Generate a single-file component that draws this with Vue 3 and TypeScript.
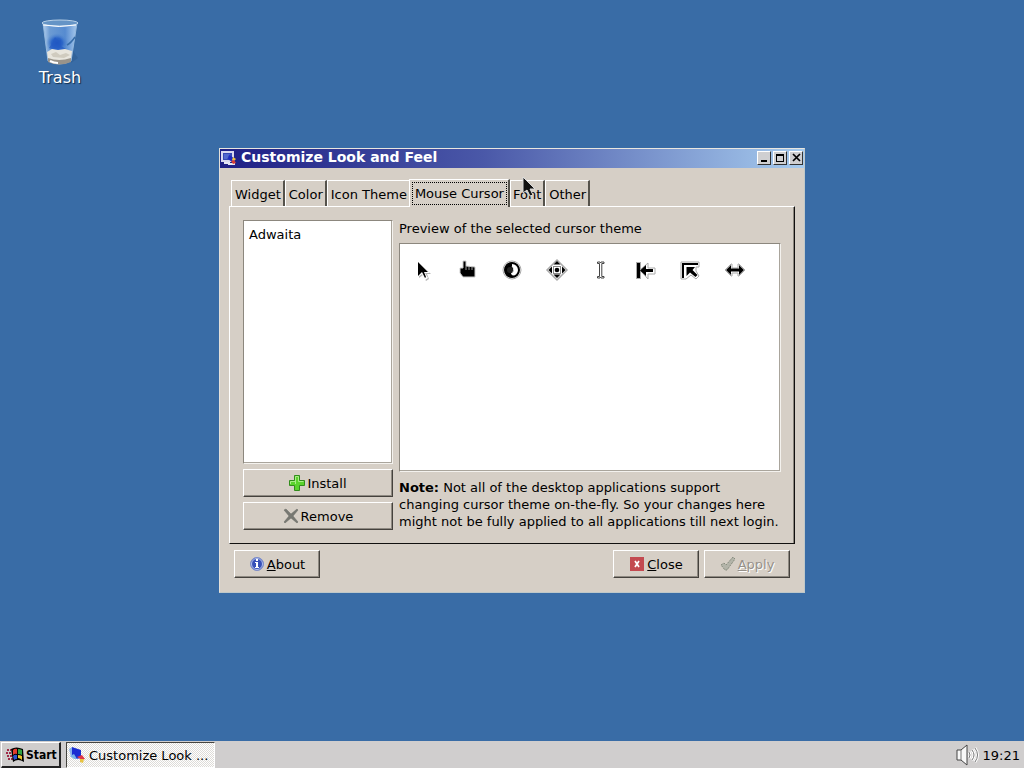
<script setup lang="ts">
import { ref } from 'vue'

const tabs: string[] = ['Widget', 'Color', 'Icon Theme', 'Mouse Cursor', 'Font', 'Other']
const activeTab = ref<string>('Mouse Cursor')
const themes: string[] = ['Adwaita']
</script>

<template>
  <div class="screen">
    <main class="desktop">
      <a class="shortcut" href="#trash">
        <svg width="40" height="48" viewBox="0 0 40 48" aria-hidden="true">
          <defs>
            <linearGradient id="glass" x1="0" x2="1" y1="0" y2="0">
              <stop offset="0" stop-color="#b4d0ee" />
              <stop offset=".2" stop-color="#6c9bd3" />
              <stop offset=".65" stop-color="#568bd0" />
              <stop offset="1" stop-color="#a8c9ec" />
            </linearGradient>
            <radialGradient id="blob">
              <stop offset="0" stop-color="#1a50bb" />
              <stop offset=".5" stop-color="#2c66c8" />
              <stop offset="1" stop-color="#568bd0" stop-opacity="0" />
            </radialGradient>
          </defs>
          <path d="M33 33 L38 40 L31 45 Z" fill="#2f5d92" opacity=".6" />
          <path d="M3 5 L8 43 Q19 49 31 43 L37 5 Z" fill="url(#glass)" stroke="#94b9df" />
          <ellipse cx="17" cy="25" rx="11" ry="10" fill="url(#blob)" />
          <path d="M9 30 L13 24 L15 19 L18 23 L21 22 L21 28 L26 31 L18 33 Z" fill="#235bc4" opacity=".7" />
          <path d="M35 19 Q31 25 27 27" fill="none" stroke="#376da9" stroke-width="1.5" />
          <path d="M7 34 L12 31 L18 32 L25 31 L32 33 L31 41 Q19 46 8 41 Z" fill="#e8e5dd" />
          <path d="M11 36 L16 34 L20 37 L26 35 L30 37 L24 40 L13 39 Z" fill="#d0cbbf" />
          <path d="M8 40 Q19 44 31 40 L31 44 Q19 49 8 44 Z" fill="#99938a" />
          <path d="M10 43 Q14 45 18 45" fill="none" stroke="#fff" stroke-width="2" />
          <ellipse cx="20" cy="5" rx="18" ry="3" fill="#6594c6" stroke="#b9d1e8" />
          <path d="M3 7 Q19 10 36 7" fill="none" stroke="#fff" />
        </svg>
        <span>Trash</span>
      </a>

      <section class="window" aria-label="Customize Look and Feel">
        <header class="titlebar">
          <svg width="16" height="16" viewBox="0 0 16 16" aria-hidden="true">
            <path d="M1 2 H12 V11 H1 Z" fill="#3549b5" stroke="#d9d9f0" stroke-width="2" />
            <path d="M3 13 H8 V14 H14" fill="none" stroke="#e6e6f5" stroke-width="2" />
            <path d="M3 4 H9 L6 9 H3 Z" fill="#5268cf" />
            <path d="M8 5 L13 8 L11 12 L7 9 Z" fill="#1d2bc0" />
            <path d="M12 7 L15 9 L13 11 L11 10 Z" fill="#f0c340" />
            <path d="M10 11 L13 10 L15 13 L12 14 Z" fill="#d83b36" />
          </svg>
          <h1>Customize Look and Feel</h1>
          <div class="controls">
            <button type="button" aria-label="Minimize">
              <svg width="12" height="12" viewBox="0 0 12 12"><path d="M3 9 H9" stroke="#000" stroke-width="2" /></svg>
            </button>
            <button type="button" aria-label="Maximize">
              <svg width="12" height="12" viewBox="0 0 12 12"><path d="M2 2 H10 V10 H2 Z M3 4 H9 V9 H3 Z" fill-rule="evenodd" /></svg>
            </button>
            <button type="button" aria-label="Close window">
              <svg width="12" height="12" viewBox="0 0 12 12"><path d="M3 2 L10 9 M10 2 L3 9" stroke="#000" stroke-width="1.7" /></svg>
            </button>
          </div>
        </header>

        <div class="body">
          <div class="tabs" role="tablist">
            <button
              v-for="tab in tabs"
              :key="tab"
              type="button"
              role="tab"
              :class="['tab', { active: tab === activeTab }]"
              :aria-selected="tab === activeTab"
              @click="activeTab = tab"
            ><span>{{ tab }}</span></button>
          </div>

          <div class="panel" role="tabpanel">
            <div class="themes">
              <ul class="list" role="listbox" aria-label="Cursor themes">
                <li v-for="theme in themes" :key="theme" role="option">{{ theme }}</li>
              </ul>
              <button type="button" class="button">
                <svg width="16" height="16" viewBox="0 0 16 16" aria-hidden="true">
                  <path d="M5.500 .5 H10.500 V5.500 H15.500 V10.500 H10.500 V15.500 H5.500 V10.500 H.5 V5.500 H5.500 Z" fill="#5bd32d" stroke="#328c1c" />
                  <path d="M6.500 9 V1.500 H9.500 V6.500 H14.500 M1.500 9 V6.500 H6" fill="none" stroke="#a9ee86" />
                </svg>
                <span>Install</span>
              </button>
              <button type="button" class="button">
                <svg width="16" height="16" viewBox="0 0 16 16" aria-hidden="true">
                  <path d="M1 2 L3 1 L8 6 L14 1 L15 2 L10 8 L15 14 L14 15 L8 10 L2 15 L1 14 L6 8 Z" fill="#777872" stroke="#696a65" stroke-width=".5" />
                </svg>
                <span>Remove</span>
              </button>
            </div>

            <div class="details">
              <p class="caption">Preview of the selected cursor theme</p>
              <div class="preview">
                <svg class="cursor" viewBox="0 0 24 24" aria-hidden="true">
                  <path d="M8 4 V20 L12 17 L15 23 L18 21 L16 16 H20 Z" fill="#b5b5b5" />
                  <path d="M7 2 V19 L11 16 L14 22 L17 20 L14 15 H19 Z" fill="#fff" />
                  <path d="M7 4 V18 L11 14 L14 20 L15 19 L13 14 H17 Z" />
                </svg>
                <svg class="cursor" viewBox="0 0 24 24" aria-hidden="true">
                  <path d="M7 3 H10 V8 L19 9 V19 H7 L4 15 V10 H7 Z" fill="#000" stroke="#ccc" />
                  <path d="M10 8 V12 M13 9 V12 M16 9 V12" stroke="#999" />
                </svg>
                <svg class="cursor" viewBox="0 0 24 24" aria-hidden="true">
                  <circle cx="12" cy="12" r="9" fill="#fff" stroke="#aaa" />
                  <circle cx="12" cy="12" r="7" fill="#fff" stroke="#000" stroke-width="2" />
                  <path d="M12 5 A7 7 0 1 0 16 18 Q11 18 11 15 L13 14 L14 11 L12 8 Z" />
                  <path d="M12 8 L14 11 L12 14" fill="none" stroke="#fff" stroke-width="1" />
                  <circle cx="10" cy="12" r="3" fill="#222" />
                </svg>
                <svg class="cursor" viewBox="0 0 24 24" aria-hidden="true">
                  <path d="M12 2 L22 12 L12 22 L2 12 Z" fill="#fff" stroke="#aaa" stroke-width="1.500" />
                  <path d="M12 3 L15.500 6.500 H8.500 Z M12 20 L8.500 16.500 H15.500 Z M3.500 12 L7 8.500 V15.500 Z M20.500 12 L17 15.500 V8.500 Z" />
                  <rect x="8.500" y="8.500" width="7" height="7" fill="none" stroke="#888" />
                  <circle cx="12" cy="12" r="2.300" />
                </svg>
                <svg class="cursor" viewBox="0 0 24 24" aria-hidden="true">
                  <path d="M8.500 4 H11 L11.500 5 L12 4 H15 V5.500 H12.800 V18.500 H15 V20 H12 L11.500 19 L11 20 H8.500 V18.500 H10.500 V5.500 H8.500 Z" fill="#fff" stroke="#444" />
                </svg>
                <svg class="cursor" viewBox="0 0 24 24" aria-hidden="true">
                  <g fill="none" stroke="#aaa" stroke-width="5"><path d="M4.500 4 V21" /></g>
                  <path d="M6 12 L14 5 V10 H21 V16 H14 V21 Z" fill="#fff" stroke="#aaa" />
                  <path d="M3 5 H6 V20 H3 Z M6 12.500 L12 7 V11 H19 V14 H12 V18 Z" />
                </svg>
                <svg class="cursor" viewBox="0 0 24 24" aria-hidden="true">
                  <path d="M3 4 H21 V9 H18 V13 L21 18 L18 21 L13 17 L8 21 H3 Z" fill="#fff" stroke="#aaa" />
                  <path d="M4 5 H20 V7 H6 V20 H4 Z M8.500 9 H17 L14.500 12 L19.500 17 L17.500 19 L12 14.500 L8.500 18 Z" />
                </svg>
                <svg class="cursor" viewBox="0 0 24 24" aria-hidden="true">
                  <path d="M2 12 L8 6 H9 V10 H15 V6 H16 L22 12 L16 18 H15 V15 H9 V18 H8 Z" fill="#fff" stroke="#aaa" />
                  <path d="M3 12 L8 7 V10.500 H16 V7 L21 12 L16 17 V13.500 H8 V17 Z" />
                </svg>
              </div>
              <p class="note"><strong>Note:</strong> Not all of the desktop applications support changing cursor theme on-the-fly. So your changes here might not be fully applied to all applications till next login.</p>
            </div>
          </div>

          <footer class="actions">
            <button type="button" class="button">
              <svg width="16" height="16" viewBox="0 0 16 16" aria-hidden="true">
                <circle cx="8" cy="8" r="6.500" fill="#3650b8" stroke="#7f8fc9" />
                <circle cx="8" cy="8" r="5.500" fill="none" stroke="#b4c1ec" />
                <path d="M7 3 H9 V5 H7 Z M6 6 H9 V11 H10 V12 H6 V11 H7 V7 H6 Z" fill="#fff" />
              </svg>
              <span><u>A</u>bout</span>
            </button>
            <button type="button" class="button close">
              <svg width="16" height="16" viewBox="0 0 16 16" aria-hidden="true">
                <rect x="1" y="1" width="14" height="14" fill="#c34a50" />
                <path d="M6 5 L10 11 M10 5 L6 11" stroke="#fff" stroke-width="1.700" />
              </svg>
              <span><u>C</u>lose</span>
            </button>
            <button type="button" class="button" disabled>
              <svg width="16" height="16" viewBox="0 0 16 16" aria-hidden="true">
                <path d="M1 9 L4 7 L6 9 L13 1 L15 3 L7 14 H5 Z" fill="#b3b4a9" stroke="#858b7d" stroke-dasharray="2 1" />
              </svg>
              <span><u>A</u>pply</span>
            </button>
          </footer>
        </div>
      </section>

      <svg class="pointer" width="16" height="22" viewBox="0 0 16 22" aria-hidden="true">
        <path d="M1 1 V17 L5 14 L8 20 L11 19 L8 13 H13 Z" fill="#111" stroke="#ddd" stroke-width="1" />
      </svg>
    </main>

    <nav class="taskbar">
      <button type="button" class="start">
        <svg width="20" height="18" viewBox="0 0 20 18" aria-hidden="true">
          <path d="M2 4 H6 M1 7 H6 M2 10 H7 M3 13 H8" stroke="#a02b48" stroke-width="2" stroke-dasharray="2 1" />
          <path d="M6 3 Q11 0 18 3 L19 16 Q13 12 8 16 Z" fill="#000" />
          <path d="M8 4 Q10 2 12 3 L12 8 Q10 7 8 9 Z" fill="#e23b2e" />
          <path d="M13 3 Q15 3 17 4 V9 Q15 8 13 8 Z" fill="#33a343" />
          <path d="M8 10 Q10 8 12 9 V13 Q10 13 9 14 Z" fill="#2d52d0" />
          <path d="M13 9 Q15 9 17 10 V14 Q15 12 13 12 Z" fill="#ebc72e" />
        </svg>
        <span>Start</span>
      </button>
      <button type="button" class="task">
        <svg width="18" height="18" viewBox="0 0 18 18" aria-hidden="true">
          <path d="M1 3 L4 1 L6 10 L3 11 Z" fill="#8ab4ea" />
          <path d="M4 1 L13 4 L13 12 L8 13 L4 9 Z" fill="#1a2ed2" />
          <path d="M2 10 L6 8 L9 13 L6 13 Z" fill="#79b5eb" />
          <path d="M9 11 L14 9 L17 13 L14 14 Z" fill="#df3547" />
          <path d="M12 13 L16 13 L15 17 L12 16 Z" fill="#e8c441" />
        </svg>
        <span>Customize Look ...</span>
      </button>
      <div class="tray">
        <svg width="26" height="24" viewBox="0 0 26 24" aria-hidden="true">
          <path d="M2 7 H6 L12 2 V22 L6 17 H2 Z" fill="#f8f8f8" stroke="#444" />
          <path d="M6 7 V17" stroke="#777" />
          <g fill="none" stroke="#fff" stroke-width="3"><path d="M14 9 Q16 12 14 15 M17 7 Q21 12 17 17 M20 5 Q25 12 20 19" /></g>
          <g fill="none" stroke="#777"><path d="M14 9 Q16 12 14 15 M17 7 Q21 12 17 17 M20 5 Q25 12 20 19" /></g>
        </svg>
        <time>19:21</time>
      </div>
    </nav>
  </div>
</template>

<style>
body {
  margin: 0;
}
</style>

<style scoped>
.screen {
  display: flex;
  flex-direction: column;
  min-height: 100vh;
  font: 13px/17px "DejaVu Sans", sans-serif;
  color: #000;
  background: #396ca6;
}
.screen *, .screen {
  box-sizing: border-box;
}
svg {
  display: block;
  flex: none;
}
button {
  font: inherit;
  color: inherit;
  margin: 0;
  padding: 0;
  border-radius: 0;
}
h1, p, ul {
  margin: 0;
  padding: 0;
}
.desktop {
  position: relative;
  flex: 1;
  display: grid;
  place-items: center;
}
.shortcut {
  position: absolute;
  left: 20px;
  top: 18px;
  width: 80px;
  display: flex;
  flex-direction: column;
  align-items: center;
  gap: 2px;
  font-size: 16px;
  line-height: 20px;
  color: #fff;
  text-decoration: none;
  text-shadow: 1px 1px 1px #0f2a48;
}
.window {
  width: 586px;
  max-width: 100%;
  background: #d6cfc6;
  border: 1px solid;
  border-color: #e9e6df #bfc8c9 #bfc8c9 #e4e0d9;
}
.titlebar {
  display: flex;
  align-items: center;
  gap: 4px;
  height: 19px;
  padding: 0 1px 2px;
  background: linear-gradient(90deg, #1f1f85, #4a58a8 45%, #a6cbee);
}
.titlebar h1 {
  flex: 1;
  font-size: 14px;
  line-height: 17px;
  color: #fff;
}
.controls {
  display: flex;
  gap: 2px;
}
.controls button {
  display: grid;
  place-items: center;
  width: 14px;
  height: 14px;
  background: #cfcfd1;
  border: 1px solid;
  border-color: #fff #333 #333 #fff;
}
.body {
  padding: 11px 9px 14px;
}
.tabs {
  display: flex;
  align-items: flex-end;
  padding-left: 2px;
}
.tab {
  height: 26px;
  padding: 2px 2px 0 3px;
  background: #d6cfc6;
  border: 1px solid #fff;
  border-right: 2px solid #55524b;
  border-bottom: 0;
}
.tab span {
  display: block;
}
.tab.active {
  height: 28px;
  margin-bottom: -1px;
  padding: 1px 1px 2px 2px;
}
.tab.active + .tab {
  padding-left: 2px;
}
.tab:has(+ .active) {
  border-right: 0;
}
.tab.active span {
  padding: 2px;
  border: 1px dotted #000;
}
.panel {
  display: grid;
  grid-template-columns: 150px minmax(0, 1fr);
  gap: 6px;
  padding: 13px;
  border: 1px solid;
  border-color: #fff #11100f #11100f #fff;
  box-shadow: inset -1px 0 #8c877e;
}
.themes {
  display: flex;
  flex-direction: column;
  gap: 5px;
}
.list {
  flex: 1;
  list-style: none;
  padding: 5px;
}
.list, .preview {
  background: #fff;
  border: 1px solid;
  border-color: #8c877e #f4f2ee #f4f2ee #8c877e;
  box-shadow: inset -1px -1px #aaa59c;
}
.button {
  display: flex;
  align-items: center;
  justify-content: center;
  gap: 2px;
  height: 28px;
  background: #d6cfc6;
  border: 1px solid;
  border-color: #fff #45423d #45423d #fff;
  box-shadow: inset -1px -1px #8f8a82;
}
.caption {
  padding-bottom: 6px;
}
.preview {
  display: flex;
  align-items: flex-start;
  justify-content: space-between;
  height: 229px;
  padding: 14px 33px 14px 11px;
}
.cursor {
  width: 24px;
  height: 24px;
}
.note {
  padding-top: 7px;
}
.actions {
  display: flex;
  gap: 5px;
  padding: 6px 5px 0;
}
.actions .button {
  width: 86px;
}
.close {
  margin-left: auto;
}
.button:disabled {
  color: #96918a;
  text-shadow: 1px 1px #fff;
}
.pointer {
  position: absolute;
  left: 522px;
  top: 176px;
}
.taskbar {
  display: flex;
  align-items: stretch;
  gap: 5px;
  height: 27px;
  padding: 1px 4px 0 1px;
  background: #d0cece;
}
.start {
  display: flex;
  align-items: center;
  gap: 1px;
  width: 60px;
  padding: 1px 0 0 3px;
  background: #cfcdcc;
  border: 1px solid;
  border-width: 1px 2px 2px 1px;
  border-color: #fff #222 #222 #fff;
  font: bold 12px/17px "DejaVu Sans Condensed", "DejaVu Sans", sans-serif;
}
.task {
  display: flex;
  align-items: center;
  gap: 3px;
  width: 149px;
  padding: 0 1px;
  background: repeating-conic-gradient(#fff 0 25%, #dedcd8 0 50%) 0 0 / 2px 2px;
  border: 1px solid;
  border-color: #45443f #fff #fff #45443f;
  white-space: nowrap;
}
.tray {
  display: flex;
  align-items: center;
  gap: 2px;
  margin-left: auto;
}
</style>
